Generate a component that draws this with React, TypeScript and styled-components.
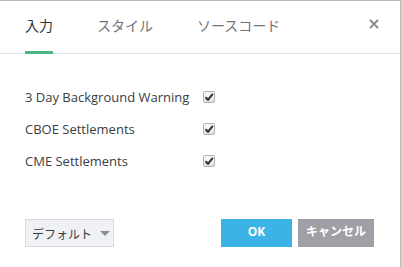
import React from "react";
import styled, { createGlobalStyle } from "styled-components";

const Global = createGlobalStyle`
  html, body { margin: 0; padding: 0; background: #ffffff; }
  * { box-sizing: border-box; }
`;

const Dialog = styled.div`
  width: 401px;
  height: 267px;
  border-top: 1px solid #b9b9b9;
  border-right: 1px solid #b9b9b9;
  background: #fff;
  display: flex;
  flex-direction: column;
  font-family: "Open Sans", "Noto Sans CJK JP", sans-serif;
`;

const Header = styled.div`
  height: 53px;
  border-bottom: 1px solid #e0e3e6;
  display: flex;
  align-items: stretch;
  padding: 0 0 0 25px;
`;

const Tabs = styled.div`
  display: flex;
  gap: 44px;
  flex: 1;
`;

const Tab = styled.div<{ $active?: boolean }>`
  position: relative;
  display: flex;
  align-items: center;
  padding-bottom: 4px;
  font-family: "Noto Sans CJK JP", sans-serif;
  font-size: 14px;
  color: ${(p) => (p.$active ? "#2f3237" : "#6f737a")};
  &::after {
    content: "";
    display: ${(p) => (p.$active ? "block" : "none")};
    position: absolute;
    left: 0;
    right: 0;
    bottom: -1px;
    height: 3px;
    background: #4cb782;
  }
`;

const Close = styled.button`
  border: none;
  background: none;
  padding: 0;
  width: 50px;
  display: flex;
  align-items: center;
  justify-content: center;
  padding-bottom: 6px;
  padding-right: 2px;
  cursor: pointer;
`;

const Body = styled.div`
  flex: 1;
  padding: 27px 0 0 25px;
  display: flex;
  flex-direction: column;
`;

const Row = styled.label`
  display: grid;
  grid-template-columns: 178px 13px;
  align-items: center;
  height: 32px;
  font-family: "Open Sans", sans-serif;
  font-size: 13px;
  color: #3a3d42;
`;

const Box = styled.span`
  width: 12px;
  height: 12px;
  border: 1px solid #b3b3b3;
  border-radius: 2px;
  background: linear-gradient(#fbfbfb, #e4e4e4);
  display: flex;
  align-items: center;
  justify-content: center;
`;

const Footer = styled.div`
  display: flex;
  align-items: center;
  padding: 0 26px 20px 25px;
  gap: 6px;
`;

const Defaults = styled.button`
  height: 28px;
  width: 89px;
  border: 1px solid #d8dadd;
  background: #f0f1f5;
  color: #3a3d42;
  font-family: "Noto Sans CJK JP", sans-serif;
  font-size: 12px;
  display: flex;
  align-items: center;
  justify-content: center;
  gap: 8px;
  padding: 0 0 0 3px;
  margin-right: auto;
`;

const Caret = styled.span`
  width: 0;
  height: 0;
  border-left: 5px solid transparent;
  border-right: 5px solid transparent;
  border-top: 5px solid #8a8e95;
`;

const Action = styled.button<{ $primary?: boolean; $w: number }>`
  height: 28px;
  width: ${(p) => p.$w}px;
  border: none;
  background: ${(p) => (p.$primary ? "#3bb3e4" : "#9ea0a6")};
  color: #fff;
  font-family: "Open Sans", "Noto Sans CJK JP", sans-serif;
  font-weight: 700;
  font-size: 12px;
  padding: 0 0 4px;
`;

const Check = () => (
  <svg width="10" height="10" viewBox="0 0 10 10">
    <path d="M1.5 5.2 L4 7.8 L8.8 1.8" stroke="#2e2e2e" strokeWidth="2" fill="none" />
  </svg>
);

const items = ["3 Day Background Warning", "CBOE Settlements", "CME Settlements"];

export default function App() {
  return (
    <>
      <Global />
      <Dialog>
        <Header>
          <Tabs>
            <Tab $active>入力</Tab>
            <Tab>スタイル</Tab>
            <Tab>ソースコード</Tab>
          </Tabs>
          <Close aria-label="close">
            <svg width="10" height="10" viewBox="0 0 10 10">
              <path d="M1 1 L9 9 M9 1 L1 9" stroke="#8a8e95" strokeWidth="2" />
            </svg>
          </Close>
        </Header>
        <Body>
          {items.map((t) => (
            <Row key={t}>
              <span>{t}</span>
              <Box>
                <Check />
              </Box>
            </Row>
          ))}
        </Body>
        <Footer>
          <Defaults>
            デフォルト <Caret />
          </Defaults>
          <Action $primary $w={71}>OK</Action>
          <Action $w={76}>キャンセル</Action>
        </Footer>
      </Dialog>
    </>
  );
}
